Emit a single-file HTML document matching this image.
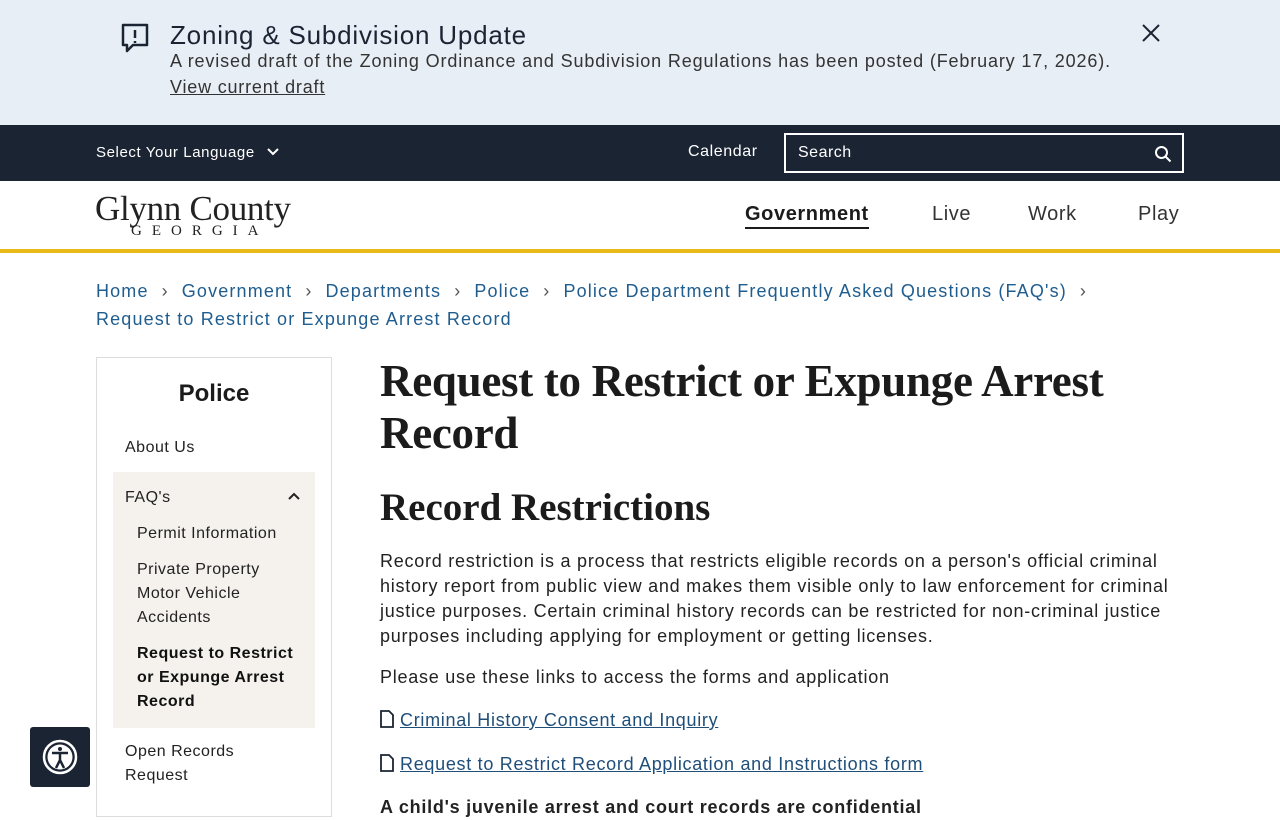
<!DOCTYPE html>
<html><head><meta charset="utf-8"><style>
*{margin:0;padding:0;box-sizing:border-box}
body{width:1280px;height:800px;overflow:hidden;font-family:"Liberation Sans",sans-serif;color:#1b1b1b;background:#fff;position:relative}
.alert{position:absolute;top:0;left:0;width:1280px;height:125px;background:#e8eef6}
.alert .t{position:absolute;left:170px;top:20px;font-size:26px;color:#1b2433;letter-spacing:.8px}
.alert .d{position:absolute;left:170px;top:51px;font-size:18px;color:#333;letter-spacing:.85px;white-space:nowrap}
.alert a{position:absolute;left:170px;top:77px;font-size:18px;color:#333;text-decoration:underline;letter-spacing:.8px}
.top{position:absolute;top:125px;left:0;width:1280px;height:56px;background:#1b2433;color:#fff}
.lang{position:absolute;left:96px;top:19px;font-size:15px;letter-spacing:.6px}
.cal{position:absolute;left:688px;top:18px;font-size:16px;letter-spacing:.6px}
.search{position:absolute;left:784px;top:8px;width:400px;height:40px;border:2px solid #fff;background:#1b2433}
.search span{position:absolute;left:12px;top:9px;font-size:16px;letter-spacing:.5px}
.hdr{position:absolute;top:181px;left:0;width:1280px;height:68px;border-bottom:4px solid #eab916;box-sizing:content-box}
.logo{position:absolute;left:95px;top:8px;font-family:"Liberation Serif",serif;font-size:35px;color:#222;letter-spacing:-.3px}
.logo small{position:absolute;left:36px;top:34px;font-size:15px;letter-spacing:10px;white-space:nowrap}
.nav a{position:absolute;top:22px;font-size:20px;color:#333;text-decoration:none;letter-spacing:.6px}
.bc{position:absolute;left:96px;top:277px;width:1110px;font-size:18px;color:#1f5d8f;line-height:28px;letter-spacing:1.15px}
.bc i{font-style:normal;color:#555;margin:0 13px}
.side{position:absolute;left:96px;top:357px;width:236px;height:460px;border:1px solid #ddd}
.side h3{text-align:center;font-size:24px;margin-top:22px}
.side .it{position:absolute;left:28px;font-size:16px;color:#222;line-height:24px;letter-spacing:.5px}
.sel{position:absolute;left:16px;top:114px;width:202px;height:256px;background:#f5f2ed}
.main{position:absolute;left:380px;top:355px;width:800px}
h1{font-family:"Liberation Serif",serif;font-size:45px;line-height:52px;font-weight:bold;letter-spacing:-.3px}
h2{font-family:"Liberation Serif",serif;font-size:39px;font-weight:bold;margin-top:26px}
p{font-size:18px;line-height:25px;color:#222;letter-spacing:.75px}
.lk{font-size:18px;color:#1f4e79;text-decoration:underline;letter-spacing:.7px}
.acc{position:absolute;left:30px;top:727px;width:60px;height:60px;background:#1b2433;border-radius:3px}
</style></head><body>
<div class="alert">
<svg style="position:absolute;left:119px;top:22px" width="32" height="32" viewBox="0 0 32 32" fill="none" stroke="#1b2433" stroke-width="2.5"><path d="M4 3h24v20H14l-6 6v-6H4z" stroke-linejoin="round"/><path d="M16 8v8M16 19v2"/></svg>
<div class="t">Zoning &amp; Subdivision Update</div>
<div class="d">A revised draft of the Zoning Ordinance and Subdivision Regulations has been posted (February 17, 2026).</div>
<a>View current draft</a>
<svg style="position:absolute;left:1141px;top:23px" width="20" height="20" viewBox="0 0 20 20" stroke="#1b2433" stroke-width="2"><path d="M2 2l16 16M18 2L2 18"/></svg>
</div>
<div class="top">
<div class="lang">Select Your Language <svg width="14" height="10" viewBox="0 0 14 10" style="margin-left:6px" fill="none" stroke="#fff" stroke-width="2"><path d="M2 2l5 5 5-5"/></svg></div>
<div class="cal">Calendar</div>
<div class="search"><span>Search</span><svg style="position:absolute;right:10px;top:10px" width="18" height="18" viewBox="0 0 18 18" fill="none" stroke="#fff" stroke-width="2"><circle cx="7.5" cy="7.5" r="5.5"/><path d="M11.5 11.5l5 5"/></svg></div>
</div>
<div class="hdr">
<div class="logo">Glynn County<small>GEORGIA</small></div>
<div class="nav"><a style="left:745px;font-weight:bold;color:#1b1b1b;border-bottom:2px solid #1b1b1b;padding-bottom:1px">Government</a><a style="left:932px">Live</a><a style="left:1028px">Work</a><a style="left:1138px">Play</a></div>
</div>
<div class="bc">Home<i>›</i>Government<i>›</i>Departments<i>›</i>Police<i>›</i>Police Department Frequently Asked Questions (FAQ's)<i>›</i><br>Request to Restrict or Expunge Arrest Record</div>
<div class="side">
<h3>Police</h3>
<div class="it" style="top:78px">About Us</div>
<div class="sel"></div>
<div class="it" style="top:128px">FAQ's</div>
<svg style="position:absolute;left:190px;top:133px" width="14" height="10" viewBox="0 0 14 10" fill="none" stroke="#222" stroke-width="2"><path d="M2 8l5-5 5 5"/></svg>
<div class="it" style="left:40px;top:164px">Permit Information</div>
<div class="it" style="left:40px;top:200px">Private Property<br>Motor Vehicle<br>Accidents</div>
<div class="it" style="left:40px;top:284px;font-weight:bold;color:#111">Request to Restrict<br>or Expunge Arrest<br>Record</div>
<div class="it" style="top:382px">Open Records<br>Request</div>
</div>
<div class="main">
<h1>Request to Restrict or Expunge Arrest Record</h1>
<h2>Record Restrictions</h2>
<p style="margin-top:19px">Record restriction is a process that restricts eligible records on a person's official criminal history report from public view and makes them visible only to law enforcement for criminal justice purposes. Certain criminal history records can be restricted for non-criminal justice purposes including applying for employment or getting licenses.</p>
<p style="margin-top:16px">Please use these links to access the forms and application</p>
<p style="margin-top:18px"><svg width="14" height="18" viewBox="0 0 14 18" fill="none" stroke="#1b2433" stroke-width="1.8" style="vertical-align:-2px;margin-right:6px"><path d="M1 1h8l4 4v12H1z"/></svg><span class="lk">Criminal History Consent and Inquiry</span></p>
<p style="margin-top:19px"><svg width="14" height="18" viewBox="0 0 14 18" fill="none" stroke="#1b2433" stroke-width="1.8" style="vertical-align:-2px;margin-right:6px"><path d="M1 1h8l4 4v12H1z"/></svg><span class="lk">Request to Restrict Record Application and Instructions form</span></p>
<p style="margin-top:18px;font-weight:bold">A child's juvenile arrest and court records are confidential</p>
</div>
<div class="acc"><svg style="position:absolute;left:12px;top:12px" width="36" height="36" viewBox="0 0 36 36" fill="none" stroke="#fff"><circle cx="18" cy="18" r="16" stroke-width="2.5"/><circle cx="18" cy="18" r="12.5" fill="#fff" stroke="none"/><circle cx="18" cy="10" r="2" fill="#1b2433" stroke="none"/><path d="M10 14h16M18 14v7M18 21l-4 8M18 21l4 8" stroke="#1b2433" stroke-width="2.5"/></svg></div>
</body></html>
